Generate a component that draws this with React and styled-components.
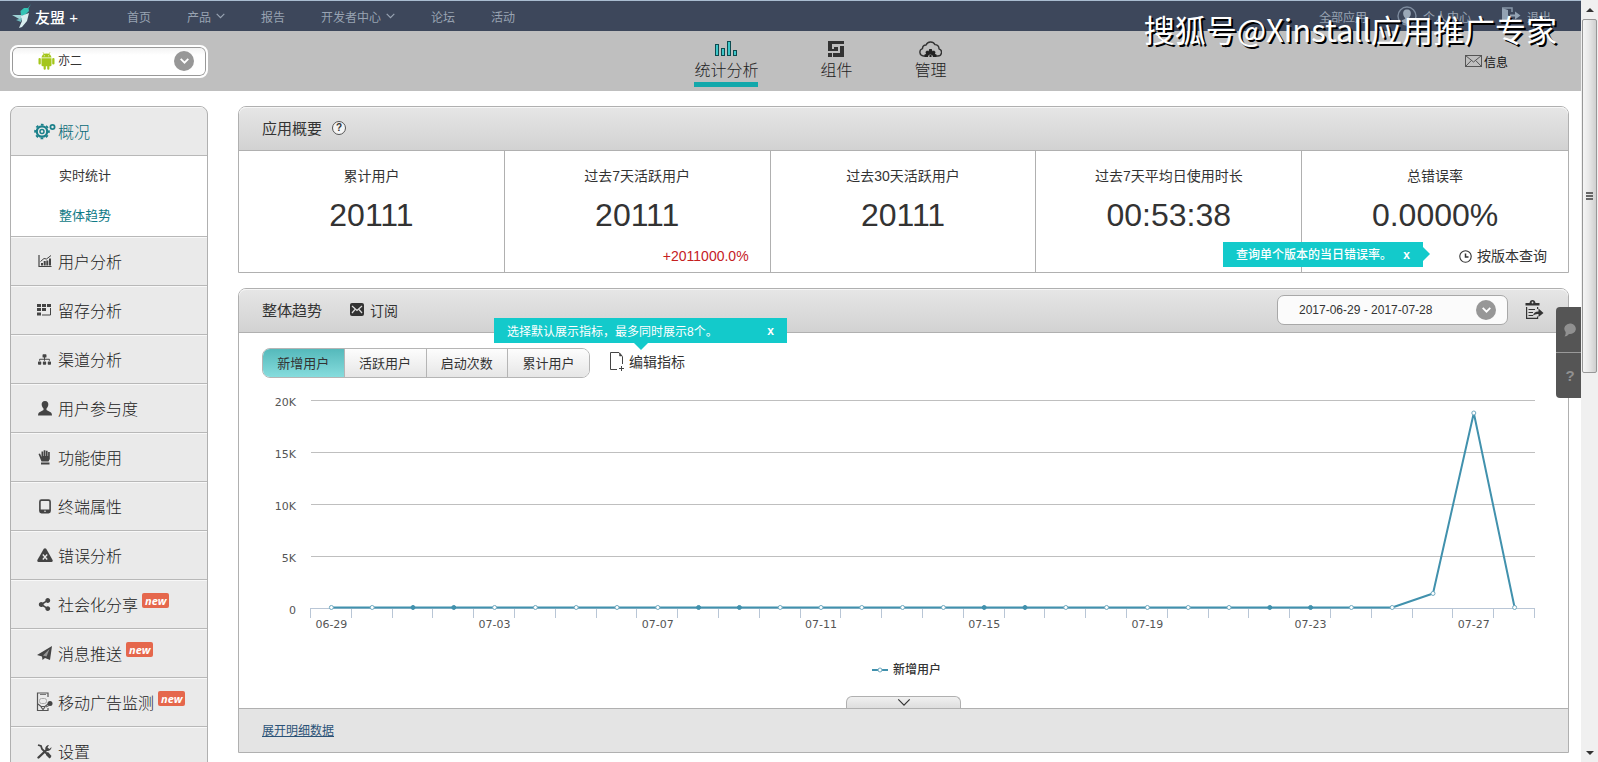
/* eslint-disable react/prop-types */
import React, { useState } from 'react';
import { styled, createGlobalStyle, css } from 'styled-components';
import { FaShareAlt, FaSitemap } from 'react-icons/fa';

const NAV = [
  { label: '首页' },
  { label: '产品', more: true },
  { label: '报告' },
  { label: '开发者中心', more: true },
  { label: '论坛' },
  { label: '活动' },
];

const STATS = [
  { label: '累计用户', value: '20111' },
  { label: '过去7天活跃用户', value: '20111', change: '+2011000.0%' },
  { label: '过去30天活跃用户', value: '20111' },
  { label: '过去7天平均日使用时长', value: '00:53:38' },
  { label: '总错误率', value: '0.0000%', query: true },
];

const METRICS = ['新增用户', '活跃用户', '启动次数', '累计用户'];

/* icons */

const LogoIcon = () => (
  <svg width="20" height="24" viewBox="0 0 20 24" aria-hidden="true">
    <path d="M19 0 L16 4 L12 4 L8.500 7 L9 12 L13 11 L17 7 L16.500 4.500 Z" fill="#35c3b5" />
    <path d="M0 11 L9 11 L12 13 L9 16 Z" fill="#9fd3d6" />
    <path d="M9 12 L17 9 L15 17 L10 23 L7 24 L10 17 Z" fill="#d9eef0" />
    <path d="M4 16 L10 14 L9 18 Z" fill="#6fbcc0" />
  </svg>
);

const Chevron = ({ width = 9, height = 6, stroke = 1.2 }) => (
  <svg width={width} height={height} viewBox="0 0 9 6" aria-hidden="true">
    <path d="M0.700 0.900 L4.500 4.700 L8.300 0.900" fill="none" stroke="currentColor" strokeWidth={stroke} />
  </svg>
);

const UserIcon = () => (
  <svg width="20" height="20" viewBox="0 0 20 20" aria-hidden="true">
    <circle cx="10" cy="10" r="9" fill="none" stroke="#7d8b9e" strokeWidth="1.400" />
    <path d="M10 3.500 C7 3.500 6 5.500 6.200 8 C6.400 10 7.500 11.500 8.300 12 C8.300 13.500 5.500 13.500 4.500 15 C7 19 13 19 15.500 15 C14.500 13.500 11.700 13.500 11.700 12 C12.500 11.500 13.600 10 13.800 8 C14 5.500 13 3.500 10 3.500 Z" fill="#9aa8b8" />
  </svg>
);

const ExitIcon = () => (
  <svg width="20" height="18" viewBox="0 0 20 18" aria-hidden="true">
    <path d="M1 1 H11 V5 M11 12 V15 H7" fill="none" stroke="#8796a8" strokeWidth="1.500" />
    <path d="M1 1 L7 3 V18 L1 15 Z" fill="#93a2b3" />
    <path d="M9 7.500 H14 V4.500 L19.500 8.500 L14 12.500 V9.500 H9 Z" fill="#93a2b3" />
  </svg>
);

const AndroidIcon = () => (
  <svg width="17" height="18" viewBox="0 0 17 18" fill="#a4c61a" aria-hidden="true">
    <path d="M3.500 5.500 C3.700 3 5.700 1.400 8.500 1.400 C11.300 1.400 13.300 3 13.500 5.500 Z" />
    <path d="M5 0.300 L6.300 2.300 M12 0.300 L10.700 2.300" stroke="#a4c61a" strokeWidth="0.700" />
    <path d="M3.500 6.200 H13.500 V13 Q13.500 14.200 12.300 14.200 H11.400 V16.700 A1.100 1.100 0 0 1 9.200 16.700 V14.200 H7.800 V16.700 A1.100 1.100 0 0 1 5.600 16.700 V14.200 H4.700 Q3.500 14.200 3.500 13 Z" />
    <rect x="0.500" y="6" width="2.300" height="6.500" rx="1.100" />
    <rect x="14.200" y="6" width="2.300" height="6.500" rx="1.100" />
    <circle cx="6.300" cy="3.800" r="0.500" fill="#fff" />
    <circle cx="10.700" cy="3.800" r="0.500" fill="#fff" />
  </svg>
);

const BarsIcon = () => (
  <svg width="23" height="16" viewBox="0 0 23 16" aria-hidden="true">
    <g fill="#3fc6c8" stroke="#0d4b50" strokeWidth="1">
      <rect x="0.500" y="3.500" width="3" height="11" />
      <rect x="6.500" y="7.500" width="3" height="7" />
      <rect x="12.500" y="0.500" width="3" height="14" />
      <rect x="18.500" y="9.500" width="3" height="5" />
    </g>
  </svg>
);

const WidgetIcon = () => (
  <svg width="16" height="16" viewBox="0 0 16 16" fill="#333" aria-hidden="true">
    <path d="M0 0 H16 V3 H4 V10 H0 Z M12 5 H16 V16 H5 V12 H12 Z M0 12 H4 V16 H0 Z M6 6 H10 V10 H6 Z M3 8 H6 V10 H3 Z" />
  </svg>
);

const CloudIcon = () => (
  <svg width="23" height="16" viewBox="0 0 23 16" aria-hidden="true">
    <path d="M6 15 H4.500 A3.800 3.800 0 0 1 3.500 7.600 A3.600 3.600 0 0 1 7 4 A5 5 0 0 1 16 3.600 A4 4 0 0 1 20 7.800 A3.700 3.700 0 0 1 19 15 H17" fill="none" stroke="#333" strokeWidth="1.400" />
    <path d="M5.500 16 L5.500 13.500 L7 13 L6.500 11 L8 9.600 L9.500 10.300 L10.300 8 H12.700 L13.500 10.300 L15 9.600 L16.500 11 L16 13 L17.500 13.500 V16 H14 A2.500 2.500 0 0 0 9 16 Z" fill="#222" />
    <circle cx="11.500" cy="15" r="1.200" fill="#222" />
  </svg>
);

const EnvelopeIcon = () => (
  <svg width="17" height="12" viewBox="0 0 17 12" fill="none" stroke="#555" aria-hidden="true">
    <rect x="0.500" y="0.500" width="16" height="11" />
    <path d="M0.500 0.500 L8.500 7 L16.500 0.500 M0.500 11.500 L6.300 5.500 M16.500 11.500 L10.700 5.500" />
  </svg>
);

const GearsIcon = () => (
  <svg width="22" height="17" viewBox="0 0 22 17" fill="none" stroke="#1c818b" aria-hidden="true">
    <circle cx="8" cy="8.500" r="5.200" strokeWidth="2.200" />
    <circle cx="8" cy="8.500" r="6.900" strokeWidth="1.800" strokeDasharray="2.710 2.710" strokeDashoffset="1.355" />
    <circle cx="8" cy="8.500" r="2" strokeWidth="1.500" />
    <circle cx="18.500" cy="4" r="2.100" strokeWidth="1.800" />
  </svg>
);

const TrendIcon = () => (
  <svg width="14" height="14" viewBox="0 0 14 14" aria-hidden="true">
    <path d="M1 1 V12.500 H13.500" fill="none" stroke="#444" strokeWidth="1.200" />
    <path d="M3 9 H5 V11.500 H3 Z M5.700 7 H7.700 V11.500 H5.700 Z M8.300 6.500 H10.300 V11.500 H8.300 Z M11 4.500 H13 V11.500 H11 Z" fill="#444" />
    <path d="M2.500 7.500 L6 4.500 L8.500 5 L13 1.500" fill="none" stroke="#444" />
  </svg>
);

const GridIcon = () => (
  <svg width="15" height="12" viewBox="0 0 15 12" aria-hidden="true">
    <path d="M0 0 H4 V3 H0 Z M5 0 H9 V3 H5 Z M10 0 H14 V3 H10 Z M0 4 H4 V7 H0 Z M5 4 H9 V7 H5 Z M0 8.500 H4 V11.500 H0 Z" fill="#444" />
    <path d="M5 11 H13.500 V4" fill="none" stroke="#444" />
  </svg>
);

const PersonIcon = () => (
  <svg width="14" height="15" viewBox="0 0 14 15" fill="#444" aria-hidden="true">
    <path d="M7 0 C9.500 0 10.600 1.800 10.300 4 C10 6 9 7 8.500 7.500 V9 L13 11.500 Q14 12.500 14 14.500 H0 Q0 12.500 1 11.500 L5.500 9 V7.500 C5 7 4 6 3.700 4 C3.400 1.800 4.500 0 7 0 Z" />
  </svg>
);

const HandIcon = () => (
  <svg width="13" height="15" viewBox="0 0 13 15" fill="#444" aria-hidden="true">
    <path d="M0.500 4 L2 3.500 L3.500 7 V1.500 H5.200 V6 H5.700 V0.300 H7.400 V6 H7.900 V0.800 H9.600 V6 H10.100 V2 H11.800 V9 L10.500 11.500 H3.500 Z M3 12.400 H11.500 V14.500 H3 Z" />
  </svg>
);

const TabletIcon = () => (
  <svg width="12" height="15" viewBox="0 0 12 15" aria-hidden="true">
    <rect x="0.900" y="1.100" width="10.200" height="12.600" rx="1.600" fill="none" stroke="#444" strokeWidth="1.600" />
    <path d="M1 10.500 H11 V13.500 H1 Z" fill="#444" />
    <circle cx="6" cy="12.200" r="0.800" fill="#eaeaea" />
  </svg>
);

const WarnIcon = () => (
  <svg width="16" height="14" viewBox="0 0 16 14" aria-hidden="true">
    <path d="M6.800 0.800 Q8 -0.400 9.200 0.800 L15.600 12 Q16 14 14.500 14 H1.500 Q0 14 0.400 12 Z" fill="#444" />
    <path d="M5.800 6.500 L10.200 11.500 M10.200 6.500 L5.800 11.500" stroke="#eaeaea" strokeWidth="1.300" />
  </svg>
);

const PlaneIcon = () => (
  <svg width="15" height="15" viewBox="0 0 15 15" aria-hidden="true">
    <path d="M15 0 L0 9 L5 10.500 L5.500 14 L8 12 L13 14 Z" fill="#444" />
    <path d="M12.500 3 L6 9.500 L9.500 10.500 Z" fill="#eaeaea" opacity="0.500" />
  </svg>
);

const AdIcon = () => (
  <svg width="17" height="20" viewBox="0 0 17 20" aria-hidden="true">
    <path d="M12 5 V1 H1.500 V18.500 H12 V16" fill="none" stroke="#555" strokeWidth="1.200" />
    <path d="M4 2.500 H10" stroke="#777" />
    <rect x="3.500" y="6.500" width="7" height="5" rx="2" fill="none" stroke="#aaa" />
    <path d="M2 12 L5 14.500 H9 L12 12 M5 15 L7 17.500 L9 15" fill="none" stroke="#555" strokeWidth="1.200" />
    <circle cx="14" cy="11.500" r="2.500" fill="#444" />
    <path d="M10 15 L14 13" stroke="#555" />
  </svg>
);

const ToolsIcon = () => (
  <svg width="15" height="15" viewBox="0 0 15 15" aria-hidden="true">
    <path d="M1 1 L4 2 L5 5 L13.500 13.500" fill="none" stroke="#444" strokeWidth="1.800" />
    <path d="M9 9 L11 8 L14.500 12 L12.500 14.500 L9 11 Z" fill="#444" />
    <path d="M1.500 13.500 L10 5.500" stroke="#444" strokeWidth="2.400" strokeLinecap="round" />
    <path d="M14.500 3 L12.500 5 L10.500 3.500 L12 1 A3.800 3.800 0 0 0 8.200 5 L10 7 A4 4 0 0 0 14.500 3 Z" fill="#444" />
  </svg>
);

const ClockIcon = () => (
  <svg width="13" height="13" viewBox="0 0 13 13" aria-hidden="true">
    <circle cx="6.500" cy="6.500" r="5.700" fill="none" stroke="#333" strokeWidth="1.100" />
    <path d="M6.500 3.500 V7 H9.500" fill="none" stroke="#333" strokeWidth="1.500" />
  </svg>
);

const MailIcon = () => (
  <svg width="14" height="13" viewBox="0 0 14 13" aria-hidden="true">
    <rect width="14" height="13" rx="2" fill="#333" />
    <path d="M2 3 L7 7.500 L12 3 M2 10 L5 6.500 M12 10 L9 6.500" fill="none" stroke="#ddd" strokeWidth="1.200" />
  </svg>
);

const ExportIcon = () => (
  <svg width="19" height="20" viewBox="0 0 19 20" aria-hidden="true">
    <path d="M0.500 5.500 V3 H4.500 Q5 0 7.500 0 Q10 0 10.500 3 H14.500 V5.500 Z" fill="#333" />
    <circle cx="7.500" cy="2.500" r="0.900" fill="#ddd" />
    <path d="M1.600 7 V18.400 H12.600 V16.500 M12.600 9 V7" fill="none" stroke="#333" strokeWidth="1.200" />
    <path d="M3.500 9.500 H10 M3.500 12.500 H8 M3.500 15.500 H8" stroke="#333" strokeWidth="1.200" />
    <path d="M8 15.500 Q9 11.500 13.500 11.500 V8.500 L18.500 13 L13.500 17 V14 Q10.500 13.500 8 15.500 Z" fill="#333" />
  </svg>
);

const PageIcon = () => (
  <svg width="14" height="19" viewBox="0 0 14 19" fill="none" stroke="#444" aria-hidden="true">
    <path d="M7 17.500 H0.500 V0.500 H9 L12.500 4.500 V12" />
    <path d="M9.500 1 V4 H12 Z" fill="#444" strokeWidth="0.500" />
    <path d="M11.500 14 V19 M9 16.500 H14" />
  </svg>
);

const BubbleIcon = () => (
  <svg width="13" height="14" viewBox="0 0 13 14" aria-hidden="true">
    <path d="M7 0.500 A5.800 5.300 0 1 1 5 11 Q3 13.500 0.500 13.500 Q2 11.500 1.600 9 A5.800 5.300 0 0 1 7 0.500 Z" fill="#909090" />
  </svg>
);

const MENU = [
  { label: '用户分析', icon: <TrendIcon /> },
  { label: '留存分析', icon: <GridIcon /> },
  { label: '渠道分析', icon: <FaSitemap size={13} color="#444" /> },
  { label: '用户参与度', icon: <PersonIcon /> },
  { label: '功能使用', icon: <HandIcon /> },
  { label: '终端属性', icon: <TabletIcon /> },
  { label: '错误分析', icon: <WarnIcon /> },
  { label: '社会化分享', icon: <FaShareAlt size={13} color="#444" />, isNew: true },
  { label: '消息推送', icon: <PlaneIcon />, isNew: true },
  { label: '移动广告监测', icon: <AdIcon />, isNew: true },
  { label: '设置', icon: <ToolsIcon /> },
];

/* chart */

const DAYS = [
  '06-29', '06-30', '07-01', '07-02', '07-03', '07-04', '07-05', '07-06', '07-07', '07-08',
  '07-09', '07-10', '07-11', '07-12', '07-13', '07-14', '07-15', '07-16', '07-17', '07-18',
  '07-19', '07-20', '07-21', '07-22', '07-23', '07-24', '07-25', '07-26', '07-27', '07-28',
];
const SERIES = DAYS.map((day) => ({ '07-26': 1400, '07-27': 18750 })[day] || 50);
const LEFT = 49;
const BASE = 218;
const STEP = 40.8;

const px = (i) => LEFT + STEP * (i + 0.5);
const py = (v) => BASE - (v / 20000) * 208;
// 07-01 is a Saturday
const isWeekend = (i) => i % 7 === 2 || i % 7 === 3;

function TrendChart() {
  return (
    <ChartSvg viewBox="0 0 1283 246" role="img" aria-label="新增用户">
      {[20, 15, 10, 5, 0].map((k) => (
        <g key={k}>
          <line
            x1={LEFT}
            x2={LEFT + STEP * 30}
            y1={Math.round(py(k * 1000)) + 0.5}
            y2={Math.round(py(k * 1000)) + 0.5}
            stroke={k ? '#bfbfbf' : '#b9c6d6'}
          />
          <text x="34" y={Math.round(py(k * 1000)) + 6} textAnchor="end">
            {k ? `${k}K` : '0'}
          </text>
        </g>
      ))}
      {Array.from({ length: 31 }, (_, i) => (
        <line
          key={i}
          x1={Math.round(LEFT + STEP * i) - 0.5}
          x2={Math.round(LEFT + STEP * i) - 0.5}
          y1={BASE}
          y2={BASE + 10}
          stroke="#b9c6d6"
        />
      ))}
      {DAYS.map((day, i) =>
        i % 4 === 0 ? (
          <text key={day} x={px(i)} y={BASE + 20} textAnchor="middle">
            {day}
          </text>
        ) : null,
      )}
      <polyline
        points={SERIES.map((v, i) => `${px(i)},${py(v)}`).join(' ')}
        fill="none"
        stroke="#4191ad"
        strokeWidth="2"
        strokeLinejoin="round"
      />
      {SERIES.map((v, i) => (
        <circle
          key={DAYS[i]}
          cx={px(i)}
          cy={py(v)}
          r="2"
          fill={isWeekend(i) ? '#4191ad' : '#fff'}
          stroke={isWeekend(i) ? '#4191ad' : '#6fa9c0'}
        />
      ))}
    </ChartSvg>
  );
}

function App() {
  const [metric, setMetric] = useState(METRICS[0]);

  return (
    <Window>
      <GlobalStyle />
      <Page>
        <TopBar>
          <Logo href="#">
            <LogoIcon />
            友盟 +
          </Logo>
          <Nav>
            {NAV.map((item) => (
              <NavLink href="#" key={item.label}>
                {item.label}
                {item.more && <Chevron />}
              </NavLink>
            ))}
          </Nav>
          <Account>
            <AccountLink href="#">全部应用</AccountLink>
            <AccountLink href="#">
              <UserIcon />
              个人中心
            </AccountLink>
            <AccountLink href="#">
              <ExitIcon />
              退出
            </AccountLink>
          </Account>
          <Watermark>搜狐号@Xinstall应用推广专家</Watermark>
        </TopBar>

        <SubBar>
          <AppPicker>
            <AndroidIcon />
            <AppSelect aria-label="应用" defaultValue="亦二">
              <option>亦二</option>
            </AppSelect>
            <RoundArrow>
              <Chevron stroke={1.8} />
            </RoundArrow>
          </AppPicker>
          <Sections>
            <SectionLink href="#" $active>
              <BarsIcon />
              统计分析
            </SectionLink>
            <SectionLink href="#">
              <WidgetIcon />
              组件
            </SectionLink>
            <SectionLink href="#">
              <CloudIcon />
              管理
            </SectionLink>
          </Sections>
          <Message href="#">
            <EnvelopeIcon />
            信息
          </Message>
        </SubBar>

        <Body>
          <Sidebar>
            <MenuItem href="#" $active>
              <MenuIcon>
                <GearsIcon />
              </MenuIcon>
              概况
            </MenuItem>
            <SubMenu>
              <SubLink href="#">实时统计</SubLink>
              <SubLink href="#" $active>
                整体趋势
              </SubLink>
            </SubMenu>
            {MENU.map((item) => (
              <MenuItem href="#" key={item.label}>
                <MenuIcon>{item.icon}</MenuIcon>
                {item.label}
                {item.isNew && <NewBadge>new</NewBadge>}
              </MenuItem>
            ))}
          </Sidebar>

          <Content>
            <Card>
              <CardHeader>
                <CardTitle>应用概要</CardTitle>
                <HelpButton aria-label="帮助">?</HelpButton>
              </CardHeader>
              <Stats>
                {STATS.map((stat) => (
                  <Stat key={stat.label}>
                    <StatLabel>{stat.label}</StatLabel>
                    <StatValue>{stat.value}</StatValue>
                    <StatFoot>
                      {stat.change && <Change>{stat.change}</Change>}
                      {stat.query && (
                        <QueryButton>
                          <ClockIcon />
                          按版本查询
                        </QueryButton>
                      )}
                      {stat.query && (
                        <VersionTip>
                          查询单个版本的当日错误率。
                          <TipClose aria-label="关闭">x</TipClose>
                        </VersionTip>
                      )}
                    </StatFoot>
                  </Stat>
                ))}
              </Stats>
            </Card>

            <Card>
              <CardHeader>
                <CardTitle>整体趋势</CardTitle>
                <Subscribe>
                  <MailIcon />
                  订阅
                </Subscribe>
                <DateRange>
                  2017-06-29 - 2017-07-28
                  <RoundArrow>
                    <Chevron stroke={1.8} />
                  </RoundArrow>
                </DateRange>
                <ExportButton aria-label="导出">
                  <ExportIcon />
                </ExportButton>
              </CardHeader>
              <TrendBody>
                <MetricRow>
                  <MetricTabs>
                    {METRICS.map((name) => (
                      <MetricTab key={name} $active={name === metric} onClick={() => setMetric(name)}>
                        {name}
                      </MetricTab>
                    ))}
                  </MetricTabs>
                  <EditMetrics>
                    <EditButton>
                      <PageIcon />
                      编辑指标
                    </EditButton>
                    <MetricTip>
                      选择默认展示指标，最多同时展示8个。
                      <TipClose aria-label="关闭">x</TipClose>
                    </MetricTip>
                  </EditMetrics>
                </MetricRow>
                <TrendChart />
                <Legend>
                  <svg width="16" height="6" viewBox="0 0 16 6" aria-hidden="true">
                    <path d="M0 3 H16" stroke="#4191ad" strokeWidth="2" />
                    <circle cx="8" cy="3" r="2" fill="#fff" stroke="#6fa9c0" />
                  </svg>
                  新增用户
                </Legend>
                <ExpandTab aria-label="展开">
                  <Chevron width={16} height={9} stroke={0.8} />
                </ExpandTab>
              </TrendBody>
              <CardFooter>
                <DetailLink href="#">展开明细数据</DetailLink>
              </CardFooter>
            </Card>
          </Content>
        </Body>

        <Floaters>
          <Floater aria-label="反馈">
            <BubbleIcon />
          </Floater>
          <Floater aria-label="帮助中心">?</Floater>
        </Floaters>
      </Page>

      <ScrollTrack>
        <ScrollArrow />
        <ScrollThumb>
          <Grip />
        </ScrollThumb>
        <ScrollSpace />
        <ScrollArrow $down />
      </ScrollTrack>
    </Window>
  );
}

export default App;

const GlobalStyle = createGlobalStyle`
  * {
    box-sizing: border-box;
  }

  body {
    margin: 0;
    background: #fff;
    color: #333;
    font-family: 'Liberation Sans', 'Noto Sans CJK SC', sans-serif;
    font-size: 14px;
  }

  a {
    color: inherit;
    text-decoration: none;
  }

  button,
  select {
    padding: 0;
    border: 0;
    background: none;
    color: inherit;
    font: inherit;
    cursor: pointer;
  }

  svg {
    flex-shrink: 0;
  }
`;

const Window = styled.div`
  display: flex;
  height: 100vh;
  overflow: hidden;
`;

const Page = styled.div`
  position: relative;
  flex: 1;
  min-width: 0;
  overflow: hidden;
`;

const TopBar = styled.header`
  position: relative;
  display: flex;
  align-items: center;
  height: 31px;
  padding: 0 30px 0 12px;
  border-top: 1px solid #a9bcd0;
  background: #3d475b;
  color: #98a3b2;
  font-size: 12px;
`;

const Logo = styled.a`
  display: flex;
  align-items: center;
  gap: 3px;
  width: 115px;
  color: #fff;
  font-size: 15px;
  font-weight: 500;
`;

const Nav = styled.nav`
  display: flex;
  gap: 36px;
`;

const NavLink = styled.a`
  display: flex;
  align-items: center;
  gap: 5px;
`;

const Account = styled.div`
  display: flex;
  gap: 30px;
  margin-left: auto;
`;

const AccountLink = styled.a`
  display: flex;
  align-items: center;
  gap: 6px;
`;

const Watermark = styled.div`
  position: absolute;
  top: 3px;
  right: 24px;
  z-index: 5;
  color: #fff;
  font-family: 'Noto Sans CJK SC', sans-serif;
  font-size: 31px;
  line-height: 50px;
  white-space: nowrap;
  text-shadow: 2px 2px 0 #000;
  pointer-events: none;
`;

const SubBar = styled.div`
  display: flex;
  align-items: center;
  height: 60px;
  padding-left: 10px;
  background: #bfbfbf;
`;

const AppPicker = styled.label`
  display: flex;
  align-items: center;
  gap: 3px;
  width: 198px;
  height: 33px;
  padding: 0 12px 0 26px;
  border: 2px solid #fff;
  border-radius: 8px;
  background: linear-gradient(#f1f1f1, #fff 8px);
  box-shadow: inset 0 0 0 1px #999;
`;

const AppSelect = styled.select`
  flex: 1;
  appearance: none;
  outline: none;
  font-size: 12px;
`;

const RoundArrow = styled.span`
  display: flex;
  align-items: center;
  justify-content: center;
  width: 20px;
  height: 20px;
  border-radius: 50%;
  background: #979797;
  color: #fff;
`;

const Sections = styled.nav`
  display: flex;
  flex: 1;
  align-self: stretch;
  justify-content: center;
  gap: 62px;
`;

const SectionLink = styled.a`
  display: flex;
  flex-direction: column;
  align-items: center;
  gap: 2px;
  height: 56px;
  padding-top: 10px;
  border-bottom: 5px solid ${({ $active }) => ($active ? '#13a8ab' : 'transparent')};
  color: #222;
  font-size: 16px;
  font-weight: 300;
  line-height: 24px;
`;

const Message = styled.a`
  display: flex;
  align-items: center;
  gap: 2px;
  padding: 0 73px 0 32px;
  color: #111;
  font-size: 12px;
`;

const Body = styled.div`
  display: flex;
  align-items: flex-start;
  gap: 30px;
  padding: 15px 12px 0 10px;
`;

const Sidebar = styled.aside`
  width: 198px;
  border: 1px solid #b0b0b0;
  border-radius: 8px 8px 0 0;
  background: #eaeaea;
  overflow: hidden;
`;

const MenuItem = styled.a`
  display: flex;
  align-items: center;
  height: 49px;
  padding-left: 20px;
  border-bottom: 1px solid #b8b8b8;
  box-shadow: inset 0 1px 0 #f8f8f8;
  color: ${({ $active }) => ($active ? '#0a6b78' : '#222')};
  font-size: 16px;
  font-weight: 300;
`;

const MenuIcon = styled.span`
  display: flex;
  justify-content: center;
  width: 27px;
`;

const NewBadge = styled.span`
  align-self: flex-start;
  margin: 13px 0 0 4px;
  padding: 0 3px;
  border-radius: 2px;
  background: #e5674c;
  color: #fff;
  font-family: 'Open Sans', sans-serif;
  font-size: 11px;
  font-style: italic;
  font-weight: 700;
  line-height: 15px;
`;

const SubMenu = styled.div`
  height: 81px;
  border-bottom: 1px solid #b8b8b8;
  background: #fff;
`;

const SubLink = styled.a`
  display: block;
  padding-left: 48px;
  color: ${({ $active }) => ($active ? '#0f7a86' : '#333')};
  font-size: 13px;
  line-height: 40px;
`;

const Content = styled.main`
  display: flex;
  flex: 1;
  flex-direction: column;
  gap: 15px;
  min-width: 0;
`;

const Card = styled.section`
  border: 1px solid #b0b0b0;
  border-radius: 8px 8px 0 0;
`;

const CardHeader = styled.div`
  display: flex;
  align-items: center;
  height: 44px;
  padding: 0 24px 2px 23px;
  border-bottom: 1px solid #b0b0b0;
  border-radius: 7px 7px 0 0;
  background: linear-gradient(#e6e6e6, #d2d2d2);
  box-shadow: inset 0 1px 0 #f6f6f6;
`;

const CardTitle = styled.h2`
  margin: 0;
  font-size: 15px;
  font-weight: 400;
`;

const HelpButton = styled.button`
  width: 14px;
  height: 14px;
  margin-left: 10px;
  border: 1px solid #555;
  border-radius: 50%;
  background: #f4f4f4;
  font-size: 10px;
  font-weight: 700;
  line-height: 12px;
`;

const Stats = styled.div`
  display: grid;
  grid-template-columns: repeat(5, 1fr);
`;

const Stat = styled.div`
  height: 121px;
  padding-top: 14px;
  border-right: 1px solid #b0b0b0;
  text-align: center;

  &:last-child {
    border-right: 0;
  }
`;

const StatLabel = styled.div`
  line-height: 22px;
`;

const StatValue = styled.div`
  margin-top: 8px;
  font-size: 32px;
  line-height: 40px;
`;

const StatFoot = styled.div`
  position: relative;
  display: flex;
  justify-content: flex-end;
  margin-top: 10px;
  padding-right: 21px;
  line-height: 22px;
`;

const Change = styled.span`
  color: #c5201f;
`;

const QueryButton = styled.button`
  display: flex;
  align-items: center;
  gap: 5px;
`;

const tip = css`
  position: absolute;
  z-index: 2;
  display: flex;
  align-items: center;
  justify-content: space-between;
  height: 25px;
  padding: 0 13px;
  background: #13cacb;
  color: #fff;
  font-size: 12px;
  white-space: nowrap;

  &::after {
    content: '';
    position: absolute;
    border: 7px solid transparent;
  }
`;

const VersionTip = styled.div`
  ${tip}
  top: -3px;
  right: 145px;
  width: 200px;
  font-weight: 500;

  &::after {
    top: 5px;
    left: 100%;
    border-left-color: #13cacb;
  }
`;

const TipClose = styled.button`
  font-weight: 700;
`;

const Subscribe = styled.button`
  display: flex;
  align-items: center;
  gap: 6px;
  margin-left: 28px;
`;

const DateRange = styled.button`
  display: flex;
  align-items: center;
  justify-content: space-between;
  width: 231px;
  height: 30px;
  margin-left: auto;
  padding: 0 11px 0 21px;
  border: 1px solid #a8a8a8;
  border-radius: 7px;
  background: #fbfbfb;
  font-size: 12px;
`;

const ExportButton = styled.button`
  display: flex;
  margin-left: 17px;
`;

const TrendBody = styled.div`
  display: flex;
  flex-direction: column;
  padding: 15px 23px 0;
`;

const MetricRow = styled.div`
  display: flex;
  align-items: center;
  gap: 20px;
`;

const MetricTabs = styled.div`
  display: flex;
  width: 328px;
  border: 1px solid #b5b5b5;
  border-radius: 8px;
  overflow: hidden;
`;

const MetricTab = styled.button`
  flex: 1;
  height: 28px;
  padding-bottom: 2px;
  background: ${({ $active }) =>
    $active ? 'linear-gradient(#55b9bb, #86dcdd)' : 'linear-gradient(#fdfdfd, #e6e6e6)'};
  font-size: 13px;

  & + & {
    border-left: 1px solid #b5b5b5;
  }
`;

const EditMetrics = styled.div`
  position: relative;
  padding-bottom: 4px;
`;

const EditButton = styled.button`
  display: flex;
  align-items: center;
  gap: 5px;
`;

const MetricTip = styled.div`
  ${tip}
  bottom: 32px;
  left: -116px;
  width: 293px;

  &::after {
    top: 100%;
    left: 140px;
    border-top-color: #13cacb;
  }
`;

const ChartSvg = styled.svg`
  display: block;
  width: 100%;
  margin-top: 12px;

  text {
    fill: #555;
    font-family: 'DejaVu Sans', sans-serif;
    font-size: 11px;
  }
`;

const Legend = styled.div`
  display: flex;
  align-items: center;
  align-self: center;
  gap: 5px;
  margin-top: 24px;
  padding-left: 6px;
  font-size: 12px;
  font-weight: 500;
  line-height: 20px;
`;

const ExpandTab = styled.button`
  display: flex;
  align-items: center;
  align-self: center;
  justify-content: center;
  width: 115px;
  height: 12px;
  margin-top: 16px;
  border: 1px solid #b0b0b0;
  border-bottom: 0;
  border-radius: 6px 6px 0 0;
  background: linear-gradient(#f0f0f0, #dedede);
`;

const CardFooter = styled.div`
  height: 44px;
  padding: 0 23px;
  border-top: 1px solid #b0b0b0;
  background: #e4e4e4;
  line-height: 42px;
`;

const DetailLink = styled.a`
  color: #2b5277;
  font-size: 12px;
  text-decoration: underline;
`;

const Floaters = styled.div`
  position: absolute;
  top: 307px;
  right: 0;
  z-index: 3;
  width: 25px;
  border-radius: 4px 0 0 4px;
  background: #555;
  overflow: hidden;
`;

const Floater = styled.button`
  display: flex;
  align-items: center;
  justify-content: center;
  width: 100%;
  height: 45px;
  padding-left: 3px;
  color: #909090;
  font-size: 15px;
  font-weight: 700;

  & + & {
    height: 46px;
    border-top: 1px solid #999;
  }
`;

const ScrollTrack = styled.div`
  display: flex;
  flex-direction: column;
  width: 17px;
  padding: 0 1px;
  background: #f0f0f0;
`;

const ScrollArrow = styled.div`
  display: flex;
  align-items: center;
  justify-content: center;
  height: 19px;

  &::after {
    content: '';
    border: 4px solid transparent;
    border-top-width: ${({ $down }) => ($down ? '4px' : '0')};
    border-bottom-width: ${({ $down }) => ($down ? '0' : '4px')};
    border-top-color: #333;
    border-bottom-color: #333;
  }
`;

const ScrollThumb = styled.div`
  display: flex;
  flex: 353;
  align-items: center;
  justify-content: center;
  border: 1px solid #979797;
  border-radius: 2px;
  background: linear-gradient(90deg, #f5f5f5, #e8e8e8 45%, #cfcfcf);
`;

const ScrollSpace = styled.div`
  flex: 371;
`;

const Grip = styled.div`
  width: 7px;
  height: 8px;
  border-top: 2px solid #666;
  border-bottom: 2px solid #666;
  background: linear-gradient(transparent 1px, #666 1px, #666 3px, transparent 3px);
`;
